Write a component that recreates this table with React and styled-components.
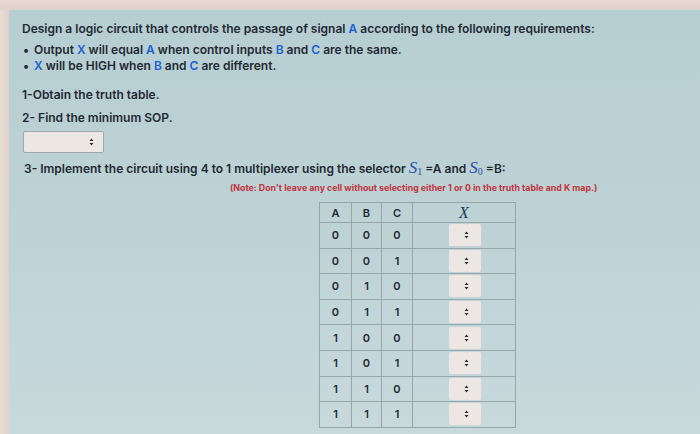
import React from 'react';
import styled, { createGlobalStyle } from 'styled-components';

const GlobalStyle = createGlobalStyle`
  html, body {
    margin: 0;
    padding: 0;
    width: 700px;
    height: 434px;
    overflow: hidden;
  }
  body {
    font-family: Inter, "Liberation Sans", Arial, sans-serif;
    color: #1f2a33;
  }
`;

const Screen = styled.div`
  width: 700px;
  height: 434px;
  display: flex;
  flex-direction: column;
  background: #e4d3cb;
`;

const TopEdge = styled.div`
  height: 10px;
  flex: none;
  background: linear-gradient(180deg, #e9d9d1, #dcd1cb);
`;

const Body = styled.div`
  flex: 1;
  display: flex;
`;

const LeftEdge = styled.div`
  width: 9px;
  flex: none;
  background: linear-gradient(90deg, #ecdcd2, #dcd3cc);
`;

const Panel = styled.div`
  flex: 1;
  padding: 10px 0 0 13px;
  background: linear-gradient(180deg, #b6ced2 0%, #bdd2d5 45%, #c8d9dc 100%);
  font-size: 12px;
  font-weight: 600;
`;

const Line = styled.div`
  height: ${p => p.h || 17}px;
  line-height: ${p => p.h || 17}px;
  padding-left: ${p => p.indent || 0}px;
  margin-top: ${p => p.mt || 0}px;
  white-space: nowrap;
`;

const Bullet = styled.span`
  display: inline-block;
  width: 11px;
  font-size: 12px;
`;

const Blue = styled.span`
  color: #1d5fd1;
`;

const Math = styled.span`
  font-family: "Liberation Serif", "Times New Roman", serif;
  font-style: italic;
  font-weight: 400;
  font-size: 17px;
  color: #2a4fa8;
  sub {
    font-size: 10px;
    font-style: normal;
    vertical-align: -2px;
  }
`;

const Note = styled.div`
  margin: 5px 0 0 208px;
  height: 10px;
  line-height: 10px;
  font-size: 8.8px;
  font-weight: 700;
  color: #c2333f;
  white-space: nowrap;
`;

const SelectBox = styled.div`
  width: ${p => p.w}px;
  height: ${p => p.h}px;
  box-sizing: border-box;
  display: flex;
  align-items: center;
  justify-content: flex-end;
  padding-right: ${p => p.pr}px;
  background: #ece7e3;
  border: ${p => (p.bordered ? '1px solid #9ea9ad' : 'none')};
  border-radius: 2px;
`;

const Arrows = () => (
  <svg width="5" height="8" viewBox="0 0 5 8">
    <path d="M2.5 0.5 L4.5 3 L0.5 3 Z M2.5 7.5 L4.5 5 L0.5 5 Z" fill="#2a2f35" />
  </svg>
);

const TableWrap = styled.div`
  margin: 9px 0 0 297px;
`;

const Table = styled.table`
  border-collapse: collapse;
  border: 1.5px solid #4a5257;
  font-size: 11px;
  font-weight: 600;
`;

const Th = styled.th`
  height: 19px;
  width: ${p => p.w}px;
  padding: 0;
  border: 1px solid #97a6aa;
  text-align: center;
  font-family: ${p => (p.italic ? '"Liberation Serif", "Times New Roman", serif' : 'inherit')};
  font-style: ${p => (p.italic ? 'italic' : 'normal')};
  font-size: ${p => (p.italic ? '16px' : '11px')};
  font-weight: ${p => (p.italic ? 400 : 600)};
  color: ${p => (p.italic ? '#263a5c' : 'inherit')};
`;

const Td = styled.td`
  height: 24.6px;
  padding: 0;
  border: 1px solid #97a6aa;
  text-align: center;
`;

const XCell = styled.div`
  display: flex;
  justify-content: center;
  padding-left: 2px;
`;

const rows = [
  [0, 0, 0], [0, 0, 1], [0, 1, 0], [0, 1, 1],
  [1, 0, 0], [1, 0, 1], [1, 1, 0], [1, 1, 1],
];

export default function App() {
  return (
    <Screen>
      <GlobalStyle />
      <TopEdge />
      <Body>
        <LeftEdge />
        <Panel>
          <Line h={17}>
            Design a logic circuit that controls the passage of signal <Blue>A</Blue> according to the following requirements:
          </Line>
          <Line h={16} mt={5} indent={1}>
            <Bullet>•</Bullet>Output <Blue>X</Blue> will equal <Blue>A</Blue> when control inputs <Blue>B</Blue> and <Blue>C</Blue> are the same.
          </Line>
          <Line h={16} indent={1}>
            <Bullet>•</Bullet><Blue>X</Blue> will be HIGH when <Blue>B</Blue> and <Blue>C</Blue> are different.
          </Line>
          <Line h={17} mt={12}>1-Obtain the truth table.</Line>
          <Line h={17} mt={6}>2- Find the minimum SOP.</Line>
          <Line h={22} mt={5} indent={1}>
            <SelectBox w={81} h={22} pr={9} bordered>
              <Arrows />
            </SelectBox>
          </Line>
          <Line h={20} mt={5} indent={2}>
            3- Implement the circuit using 4 to 1 multiplexer using the selector{' '}
            <Math>S<sub>1</sub></Math> =A and <Math>S<sub>0</sub></Math> =B:
          </Line>
          <Note>(Note: Don't leave any cell without selecting either 1 or 0 in the truth table and K map.)</Note>
          <TableWrap>
            <Table>
              <thead>
                <tr>
                  <Th w={31}>A</Th>
                  <Th w={29}>B</Th>
                  <Th w={30}>C</Th>
                  <Th w={102} italic>X</Th>
                </tr>
              </thead>
              <tbody>
                {rows.map((r, i) => (
                  <tr key={i}>
                    <Td>{r[0]}</Td>
                    <Td>{r[1]}</Td>
                    <Td>{r[2]}</Td>
                    <Td>
                      <XCell>
                        <SelectBox w={32} h={22} pr={12}>
                          <Arrows />
                        </SelectBox>
                      </XCell>
                    </Td>
                  </tr>
                ))}
              </tbody>
            </Table>
          </TableWrap>
        </Panel>
      </Body>
    </Screen>
  );
}
